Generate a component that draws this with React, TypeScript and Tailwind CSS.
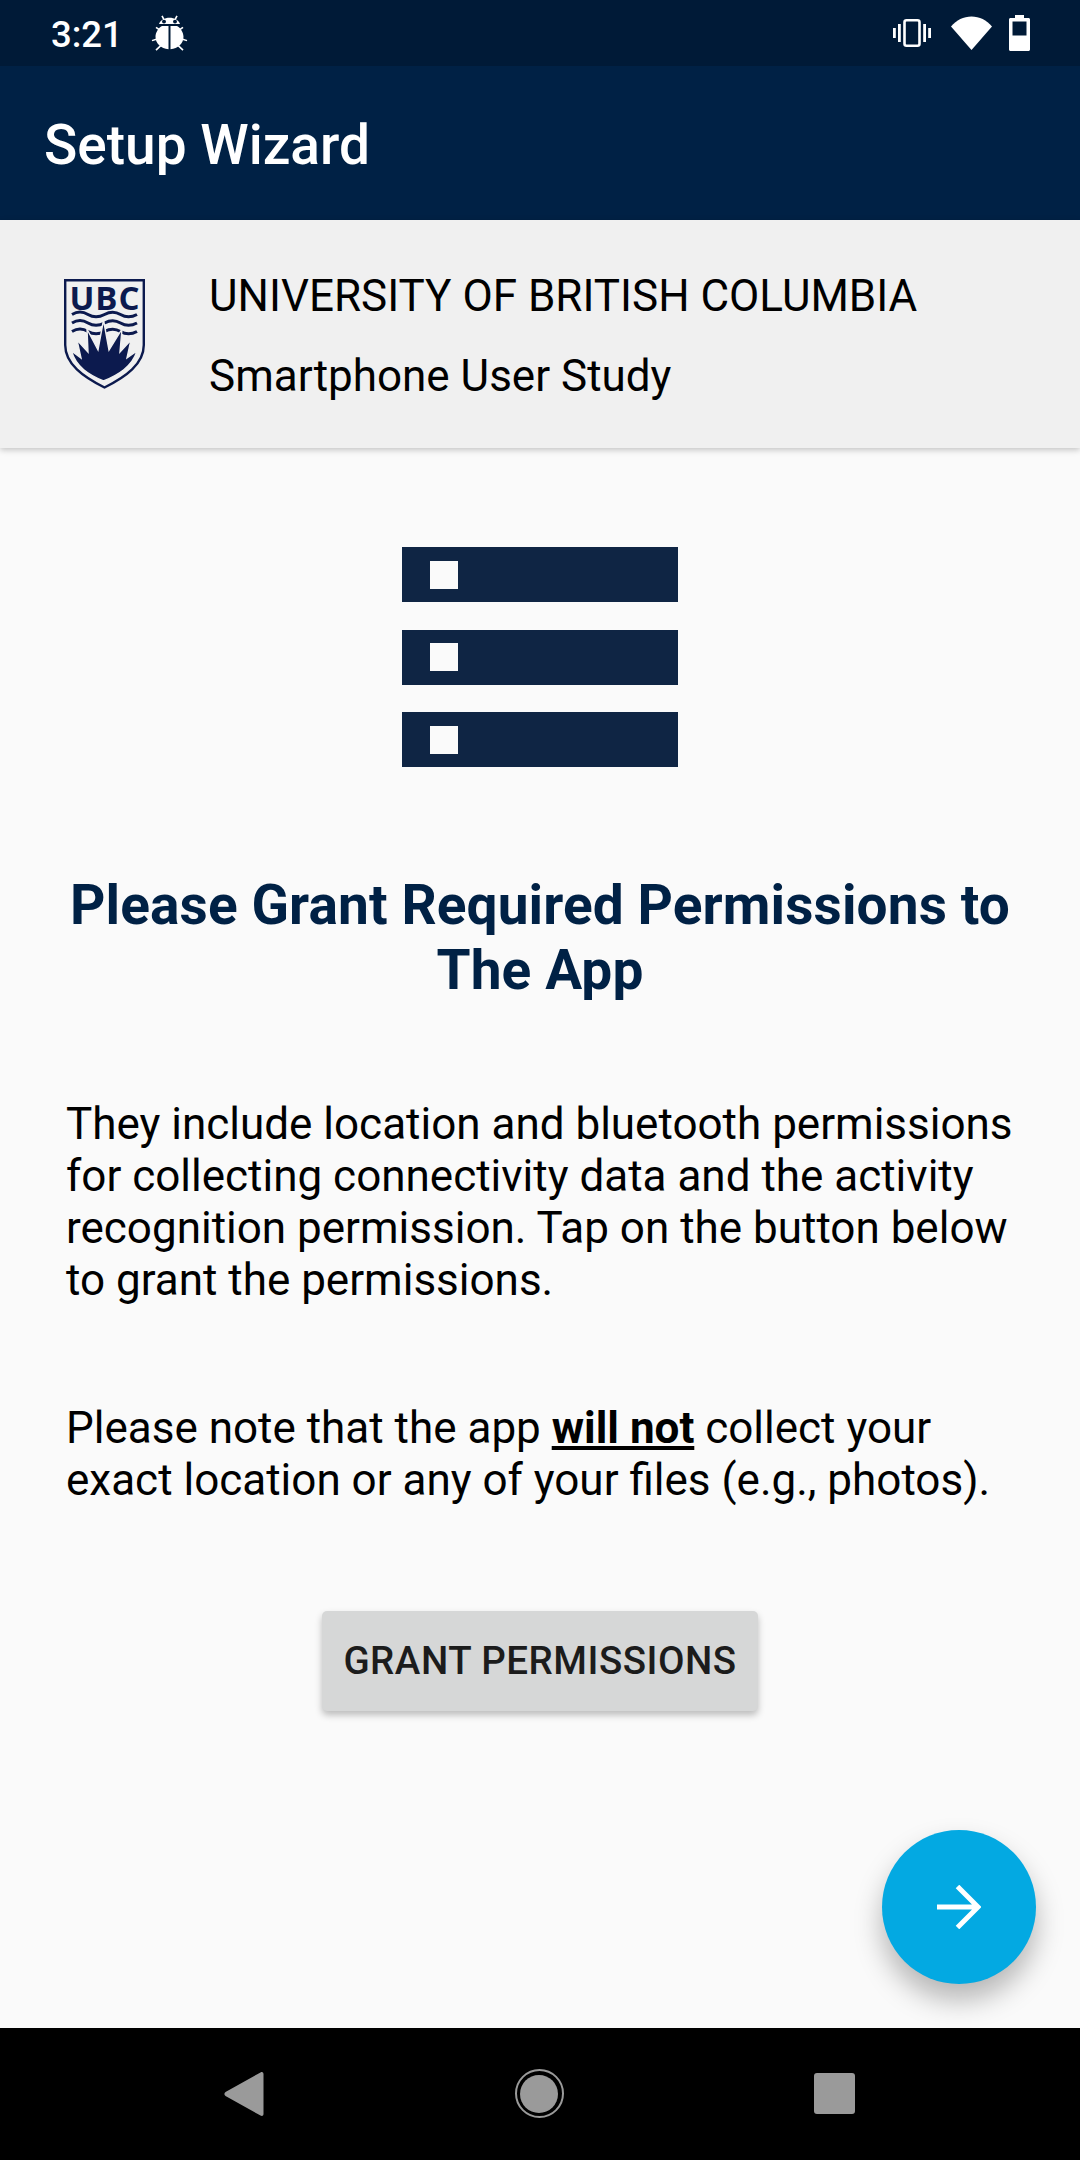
const roboto = "font-['Roboto',sans-serif]";

const BugIcon = () => (
  <svg width="37" height="38" viewBox="0 0 37 40" fill="none" preserveAspectRatio="none">
    <path d="M11 2l3 6M26 2l-3 6M5 14l4 3M32 14l-4 3M1 28l6-2M36 28l-6-2M5 38l5-5M32 38l-5-5" stroke="#fff" strokeWidth="1.6" />
    <path d="M18.5 4c5 0 9 2.500 10.500 6.500l-21 0C9.500 6.500 13.500 4 18.500 4z" fill="#fff" />
    <circle cx="13" cy="8" r="2" fill="#001b3a" />
    <circle cx="24" cy="8" r="2" fill="#001b3a" />
    <path d="M17.500 12.500V37C10 36.500 4.500 31 4.500 24c0-5 3-9.500 6.500-11.500zM19.500 12.500V37C27 36.500 32.500 31 32.500 24c0-5-3-9.500-6.500-11.500z" fill="#fff" />
  </svg>
);

const VibrateIcon = () => (
  <svg width="38" height="28" viewBox="0 0 38 28" fill="none">
    <rect x="11.500" y="1.300" width="15" height="25.400" rx="2" stroke="#fff" strokeWidth="2.600" />
    <path d="M0 9h2.800v10H0zM35.200 9H38v10h-2.800zM5 5h2.800v18H5zM30.200 5H33v18h-2.800z" fill="#fff" />
  </svg>
);

const WifiIcon = () => (
  <svg width="41" height="34" viewBox="0 0 41 34">
    <path d="M20.500 34L0 10.500C5.500 4 12.500 0.500 20.500 0.500S35.500 4 41 10.500z" fill="#fff" />
  </svg>
);

const BatteryIcon = () => (
  <svg width="21" height="36" viewBox="0 0 21 36">
    <path fillRule="evenodd" d="M6 0h9v3h4.500c.8 0 1.500.7 1.500 1.500v30c0 .8-.7 1.500-1.500 1.500h-18C.7 36 0 35.300 0 34.500v-30C0 3.700.7 3 1.500 3H6zM3.500 6.500v14h14v-14z" fill="#fff" />
  </svg>
);

const UbcLogo = () => (
  <svg width="81" height="110" viewBox="0 0 81 110" fill="none">
    <path d="M1.200 1.200h78.600V66c0 19-18 32-39.300 42.500C19.200 98 1.200 85 1.200 66z" stroke="#0c1a4e" strokeWidth="2.400" fill="#f0f0f0" />
    <text x="41" y="30.500" textAnchor="middle" fontFamily="'Open Sans',sans-serif" fontSize="33" fontWeight="700" letterSpacing="1" fill="#0c1a4e">UBC</text>
    <path d="M8 35.500c5-3 11-3 16 0s11 3 16.500 0 11-3 16 0 11 3 16.500 0M8 44c5-3 11-3 16 0s11 3 16.500 0 11-3 16 0 11 3 16.500 0M8 52.500c5-3 11-3 16 0s11 3 16.500 0 11-3 16 0 11 3 16.500 0" stroke="#0c1a4e" strokeWidth="3" />
    <path d="M39.500 41L45 71 58 50 56 73 67 61 63 79 73 72C68 88 54 96 39.500 102 25 96 12 88 7.500 72L17 79 13 61 24 73 23 50 34 71z" fill="#0c1a4e" stroke="#f0f0f0" strokeWidth="1.400" strokeLinejoin="miter" />
  </svg>
);

const PermissionsIcon = () => (
  <div className="flex w-[276px] flex-col gap-[27.5px]">
    {[0, 1, 2].map((i) => (
      <div key={i} className="flex h-[55px] items-center bg-[#0f2544] pl-[28px]">
        <div className="h-[28px] w-[28px] bg-[#fafafa]" />
      </div>
    ))}
  </div>
);

export default function App() {
  return (
    <div className={`${roboto} relative flex h-[2160px] w-[1080px] flex-col overflow-hidden bg-[#fafafa]`}>
      <div className="flex h-[66px] shrink-0 items-center justify-between bg-[#001a37] pl-[51px] pr-[50px] text-white">
        <div className="flex items-center gap-[28px]">
          <span className="pt-[4px] text-[36.5px] font-medium leading-none">3:21</span>
          <BugIcon />
        </div>
        <div className="flex items-center">
          <VibrateIcon />
          <span className="ml-[20px]"><WifiIcon /></span>
          <span className="ml-[17px]"><BatteryIcon /></span>
        </div>
      </div>

      <header className="flex h-[154px] shrink-0 items-center bg-[#002145] pl-[44px] pt-[5px]">
        <h1 className="text-[55px] font-medium text-white">Setup Wizard</h1>
      </header>

      <div className="z-10 flex h-[228px] shrink-0 items-center bg-[#f0f0f0] pl-[64px] shadow-[0_2px_6px_rgba(0,0,0,0.22)]">
        <UbcLogo />
        <div className="ml-[64px] flex flex-col gap-[29px] pt-[5px] text-[44px] leading-[51px] text-black">
          <span>UNIVERSITY OF BRITISH COLUMBIA</span>
          <span>Smartphone User Study</span>
        </div>
      </div>

      <main className="flex flex-1 flex-col items-center px-[66px] pt-[99px]">
        <PermissionsIcon />
        <h2 className="mt-[106px] text-center text-[55px] font-bold leading-[64.5px] tracking-[0.1px] text-[#002145]">
          Please Grant Required Permissions to The App
        </h2>
        <p className="mt-[96px] w-full text-[44px] leading-[52px] text-black">
          They include location and bluetooth permissions for collecting connectivity data and the activity recognition permission. Tap on the button below to grant the permissions.
        </p>
        <p className="mt-[96px] w-full text-[44px] leading-[52px] text-black">
          Please note that the app <span className="font-bold underline">will not</span> collect your exact location or any of your files (e.g., photos).
        </p>
        <button
          type="button"
          className="mt-[105px] flex h-[100px] w-[436px] items-center justify-center rounded-[5px] bg-[#d6d7d7] text-[38.5px] font-medium tracking-[0.5px] text-[#1c1c1c] shadow-[0_4px_7px_rgba(0,0,0,0.25)]"
        >
          GRANT PERMISSIONS
        </button>
      </main>

      <button
        type="button"
        className="absolute bottom-[176px] right-[44px] flex h-[154px] w-[154px] items-center justify-center rounded-full bg-[#03a9e2] shadow-[0_16px_28px_rgba(0,0,0,0.28)]"
      >
        <svg width="44" height="44" viewBox="0 0 44 44" fill="none">
          <path d="M0 22h41M20.500 1.500L41 22 20.500 42.500" stroke="#fff" strokeWidth="5" />
        </svg>
      </button>

      <nav className="flex h-[132px] shrink-0 items-center bg-black pb-[1px]">
        <div className="flex w-full items-center justify-between pl-[224px] pr-[225px]">
          <svg width="40" height="46" viewBox="0 0 40 46">
            <path d="M36.500 1.500c1.500-1 3-.2 3 1.500v40c0 1.700-1.500 2.500-3 1.500L1.500 25c-1.500-1-1.500-3 0-4z" fill="#9a9a9a" />
          </svg>
          <div className="flex h-[49px] w-[49px] items-center justify-center rounded-full border-[2.500px] border-[#9a9a9a]">
            <div className="h-[38px] w-[38px] rounded-full bg-[#9a9a9a]" />
          </div>
          <div className="h-[41px] w-[41px] rounded-[3px] bg-[#9a9a9a]" />
        </div>
      </nav>
    </div>
  );
}
